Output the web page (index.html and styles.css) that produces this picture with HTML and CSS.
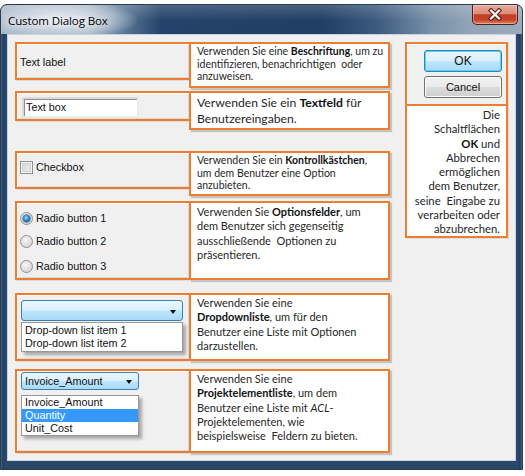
FILE: index.html
```html
<!DOCTYPE html>
<html>
<head>
<meta charset="utf-8">
<title>Custom Dialog Box</title>
<link rel="stylesheet" href="styles.css">
</head>
<body>
<div class="window">
  <div class="titlebar">
    <span class="title">Custom Dialog Box</span>
    <div class="close">
      <svg width="16" height="13" viewBox="0 0 16 13">
        <path d="M4 2.5 L12 10.5 M12 2.5 L4 10.5" stroke="#4a1d14" stroke-width="4.2" stroke-linecap="square" fill="none"/>
        <path d="M4 2.5 L12 10.5 M12 2.5 L4 10.5" stroke="#ffffff" stroke-width="2.2" stroke-linecap="square" fill="none"/>
      </svg>
    </div>
  </div>
  <div class="frame">
    <div class="client">
      <div class="lcol">
        <div class="row row1">
          <div class="lbox lb1"><span class="ctl">Text label</span></div>
          <div class="rbox rb1 small">Verwenden Sie eine <b>Beschriftung</b>, um zu<br>identifizieren, benachrichtigen&nbsp; oder<br>anzuweisen.</div>
        </div>
        <div class="row row2">
          <div class="lbox lb2"><div class="textbox ctl">Text box</div></div>
          <div class="rbox rb2 large">Verwenden Sie ein <b>Textfeld</b> für<br>Benutzereingaben.</div>
        </div>
        <div class="row row3">
          <div class="lbox lb3"><div class="opt ctl"><span class="check"></span>Checkbox</div></div>
          <div class="rbox rb3 small">Verwenden Sie ein <b>Kontrollkästchen</b>,<br>um dem Benutzer eine Option<br>anzubieten.</div>
        </div>
        <div class="row row4">
          <div class="lbox lb4">
            <div class="radios">
              <div class="opt ctl"><span class="radio on"></span>Radio button 1</div>
              <div class="opt ctl"><span class="radio"></span>Radio button 2</div>
              <div class="opt ctl opt3"><span class="radio"></span>Radio button 3</div>
            </div>
          </div>
          <div class="rbox rb4">Verwenden Sie <b>Optionsfelder</b>, um<br>dem Benutzer sich gegenseitig<br>ausschließende&nbsp; Optionen zu<br>präsentieren.</div>
        </div>
        <div class="row row5">
          <div class="lbox lb5">
            <div class="combo combo1"><span class="arrow"></span></div>
            <div class="list list1 ctl">
              <div class="item">Drop-down list item 1</div>
              <div class="item">Drop-down list item 2</div>
            </div>
          </div>
          <div class="rbox rb5">Verwenden Sie eine<br><b>Dropdownliste</b>, um für den<br>Benutzer eine Liste mit Optionen<br>darzustellen.</div>
        </div>
        <div class="row row6">
          <div class="lbox lb6">
            <div class="combo combo2 ctl"><span class="ctext">Invoice_Amount</span><span class="arrow"></span></div>
            <div class="list list2 ctl">
              <div class="item">Invoice_Amount</div>
              <div class="item sel">Quantity</div>
              <div class="item">Unit_Cost</div>
            </div>
          </div>
          <div class="rbox rb6">Verwenden Sie eine<br><b>Projektelementliste</b>, um dem<br>Benutzer eine Liste mit <i>ACL</i>-<br>Projektelementen, wie<br>beispielsweise&nbsp; Feldern zu bieten.</div>
        </div>
      </div>
      <div class="rcol">
        <div class="btns">
          <div class="btn btn-default">OK</div>
          <div class="btn">Cancel</div>
        </div>
        <div class="rtext">Die<br>Schaltflächen<br><b>OK</b> und<br>Abbrechen<br>ermöglichen<br>dem Benutzer,<br>seine&nbsp; Eingabe zu<br>verarbeiten oder<br>abzubrechen.</div>
      </div>
    </div>
  </div>
</div>
</body>
</html>
```

FILE: styles.css
```css
* { box-sizing: border-box; }
html, body { margin: 0; padding: 0; background: #ffffff; }
body {
  width: 525px;
  height: 476px;
  overflow: hidden;
  font-family: "Liberation Sans", Arial, sans-serif;
}

.window {
  margin-top: 4px;
  width: 523px;
  height: 466px;
  border: 1px solid #2b3b50;
  border-radius: 7px 7px 0 0;
  background: #284769;
  display: flex;
  flex-direction: column;
  overflow: hidden;
}

.titlebar {
  height: 29px;
  flex: none;
  display: flex;
  align-items: flex-start;
  justify-content: space-between;
  background:
    linear-gradient(to bottom, rgba(255,255,255,0.18), rgba(255,255,255,0) 55%),
    radial-gradient(ellipse 80px 20px at 58px 15px, rgba(236,241,246,0.95), rgba(205,214,225,0.55) 70%, rgba(205,214,225,0)),
    linear-gradient(to right, #a4b3c4 0, #a2b2c4 85px, #587594 125px, #24436a 160px, #1f3e63 320px, #3a5a7e 375px, #7890a9 430px, #93a4b7 470px, #9babbd 521px);
}

.title {
  margin: 8px 0 0 7px;
  font-family: "Open Sans", "Noto Sans", sans-serif;
  font-size: 11.5px;
  color: #000;
  letter-spacing: -0.1px;
  text-shadow: 0 0 6px rgba(255,255,255,0.9), 0 0 10px rgba(255,255,255,0.7);
}

.close {
  margin: 0 4px 0 0;
  width: 46px;
  height: 20px;
  border: 1px solid #4c2119;
  border-top: none;
  border-radius: 0 0 5px 5px;
  background: linear-gradient(to bottom, #e9ab9c 0%, #dc8b79 45%, #c23d24 52%, #c5432a 78%, #de8262 100%);
  box-shadow: inset 0 0 0 1px rgba(255,220,210,0.45);
  display: flex;
  align-items: center;
  justify-content: center;
}

.frame {
  flex: 1;
  padding: 0 6px 8px 6px;
  background:
    linear-gradient(to right, #4a6586 0, #213f64 2px, #2d4d73 6px, rgba(0,0,0,0) 6px, rgba(0,0,0,0) 515px, #2d4d73 515px, #213f64 519px, #4a6586 521px);
  background-color: #284769;
}

.client {
  height: 100%;
  background: #f0f0f0;
  border: 1px solid #c8d3df;
  padding: 7px 0 0 7px;
  display: flex;
  align-items: flex-start;
}

.lcol { width: 375px; display: flex; flex-direction: column; }

.row { display: flex; align-items: flex-start; }
.row2 { margin-top: 3px; }
.row3 { margin-top: 21px; }
.row4 { margin-top: 5px; }
.row5 { margin-top: 13px; }
.row6 { margin-top: 8px; }

.lbox {
  width: 174px;
  border: 2px solid #ed7d31;
  border-right: none;
  box-shadow: inset 1px 1px 0 #fbfbfb, inset -1px -1px 0 #dadada, 1px 1px 0 #dcdcdc;
}
.lb1 { height: 38px; padding: 8px 0 0 3px; }
.lb2 { height: 30px; padding: 4px 0 0 5px; }
.lb3 { height: 38px; padding: 8px 0 0 3px; }
.lb4 { height: 79px; padding: 8px 0 0 3px; }
.lb5 { height: 68px; padding: 5px 0 0 4px; }
.lb6 { height: 84px; padding: 1px 0 0 4px; }

.rbox {
  width: 201px;
  border: 2px solid #ed7d31;
  background: #ffffff;
  box-shadow: 2px 2px 1px rgba(0,0,0,0.18);
  font-family: Lato, "Open Sans", sans-serif;
  color: #262626;
  font-size: 11px;
  line-height: 14.3px;
  padding: 2px 2px 0 6px;
  white-space: nowrap;
  overflow: hidden;
}
.rbox b { font-weight: 700; color: #111; }
.rbox.small { font-size: 10.5px; line-height: 12.7px; padding-top: 1px; }
.rbox.large { font-size: 12.2px; line-height: 15.7px; padding-top: 2px; }
.rb1 { height: 46px; }
.rb2 { height: 39px; }
.rb3 { height: 45px; }
.rb4 { height: 79px; }
.rb5 { height: 68px; padding-top: 1px; }
.rb6 { height: 84px; padding-top: 1px; }

.ctl {
  font-family: "Liberation Sans", Arial, sans-serif;
  font-size: 10.8px;
  color: #111;
  line-height: 13px;
}

.textbox {
  width: 117px;
  height: 21px;
  background: #fff;
  border: 2px solid;
  border-color: #dadada #ececec #ececec #dadada;
  box-shadow: inset 1px 1px 0 #8e8e8e;
  padding: 2px 0 0 2px;
}

.opt { display: flex; align-items: center; height: 13px; }
.check {
  width: 13px;
  height: 13px;
  margin-right: 3px;
  border: 1px solid #8e8f8f;
  background: linear-gradient(135deg, #cfcfcf, #f4f4f4);
  box-shadow: inset 0 0 0 1px #f6f6f6, inset 0 0 0 2px #d0d0d0;
}

.radios { display: flex; flex-direction: column; padding-top: 1px; }
.radios .opt { margin-bottom: 9.5px; }
.radios .opt3 { margin-top: 2.5px; }
.radio {
  width: 13px;
  height: 13px;
  margin-right: 3px;
  border-radius: 50%;
  border: 1px solid #8e8f8f;
  background: radial-gradient(circle at 40% 35%, #f7f7f7, #d5d5d5 80%);
  position: relative;
}
.radio.on::after {
  content: "";
  position: absolute;
  left: 2px; top: 2px;
  width: 7px; height: 7px;
  border-radius: 50%;
  background: radial-gradient(circle at 45% 40%, #9be0ff, #1b78c2 55%, #0d3f75 100%);
  box-shadow: 0 0 0 0.5px #1d3e63;
}

.combo {
  position: relative;
  border: 1px solid #3c7fb1;
  border-radius: 3px;
  background: linear-gradient(to bottom, #eaf6fd 0%, #d9f0fc 48%, #bee6fd 52%, #a7d9f5 100%);
}
.combo1 { width: 162px; height: 21px; }
.combo2 { width: 118px; height: 18px; padding: 2px 0 0 3px; }
.arrow {
  position: absolute;
  top: 50%;
  right: 6px;
  margin-top: -1px;
  width: 0; height: 0;
  border-left: 3.5px solid transparent;
  border-right: 3.5px solid transparent;
  border-top: 4px solid #111;
}

.list {
  background: #fff;
  border: 1px solid #979797;
  box-shadow: 3px 3px 3px rgba(0,0,0,0.3);
}
.list1 { width: 162px; margin-top: 1px; padding: 1px 0 1px 0; }
.list2 { width: 118px; margin-top: 5px; padding: 0; }
.item { height: 13px; padding-left: 3px; white-space: nowrap; }
.item.sel { background: #3399ff; color: #fff; }

.rcol {
  margin-left: 15px;
  width: 103px;
  height: 196px;
  border: 2px solid #ed7d31;
  box-shadow: 1px 1px 0 #dcdcdc;
}
.btns {
  height: 62px;
  border-bottom: 2px solid #ed7d31;
  padding: 6px 4px 0 0;
  display: flex;
  flex-direction: column;
  align-items: flex-end;
  gap: 4px;
  box-shadow: inset 1px 1px 0 #fbfbfb;
}
.btn {
  width: 78px;
  height: 22px;
  border: 1px solid #707070;
  border-radius: 3px;
  background: linear-gradient(to bottom, #f2f2f2 0%, #ebebeb 48%, #dddddd 52%, #cfcfcf 100%);
  box-shadow: inset 0 0 0 1px #fcfcfc;
  font-size: 11px;
  color: #111;
  display: flex;
  align-items: center;
  justify-content: center;
}
.btn-default {
  border-color: #3c7fb1;
  background: linear-gradient(to bottom, #eaf6fd 0%, #d9f0fc 48%, #bee6fd 52%, #a7d9f5 100%);
  box-shadow: inset 0 0 0 1px #48d8fb;
  font-size: 12px;
}
.rtext {
  background: #fff;
  height: 130px;
  text-align: right;
  padding: 2px 6px 0 0;
  font-family: Lato, "Open Sans", sans-serif;
  font-size: 11.3px;
  line-height: 14.3px;
  color: #262626;
  white-space: nowrap;
}
.rtext b { color: #111; }
```
